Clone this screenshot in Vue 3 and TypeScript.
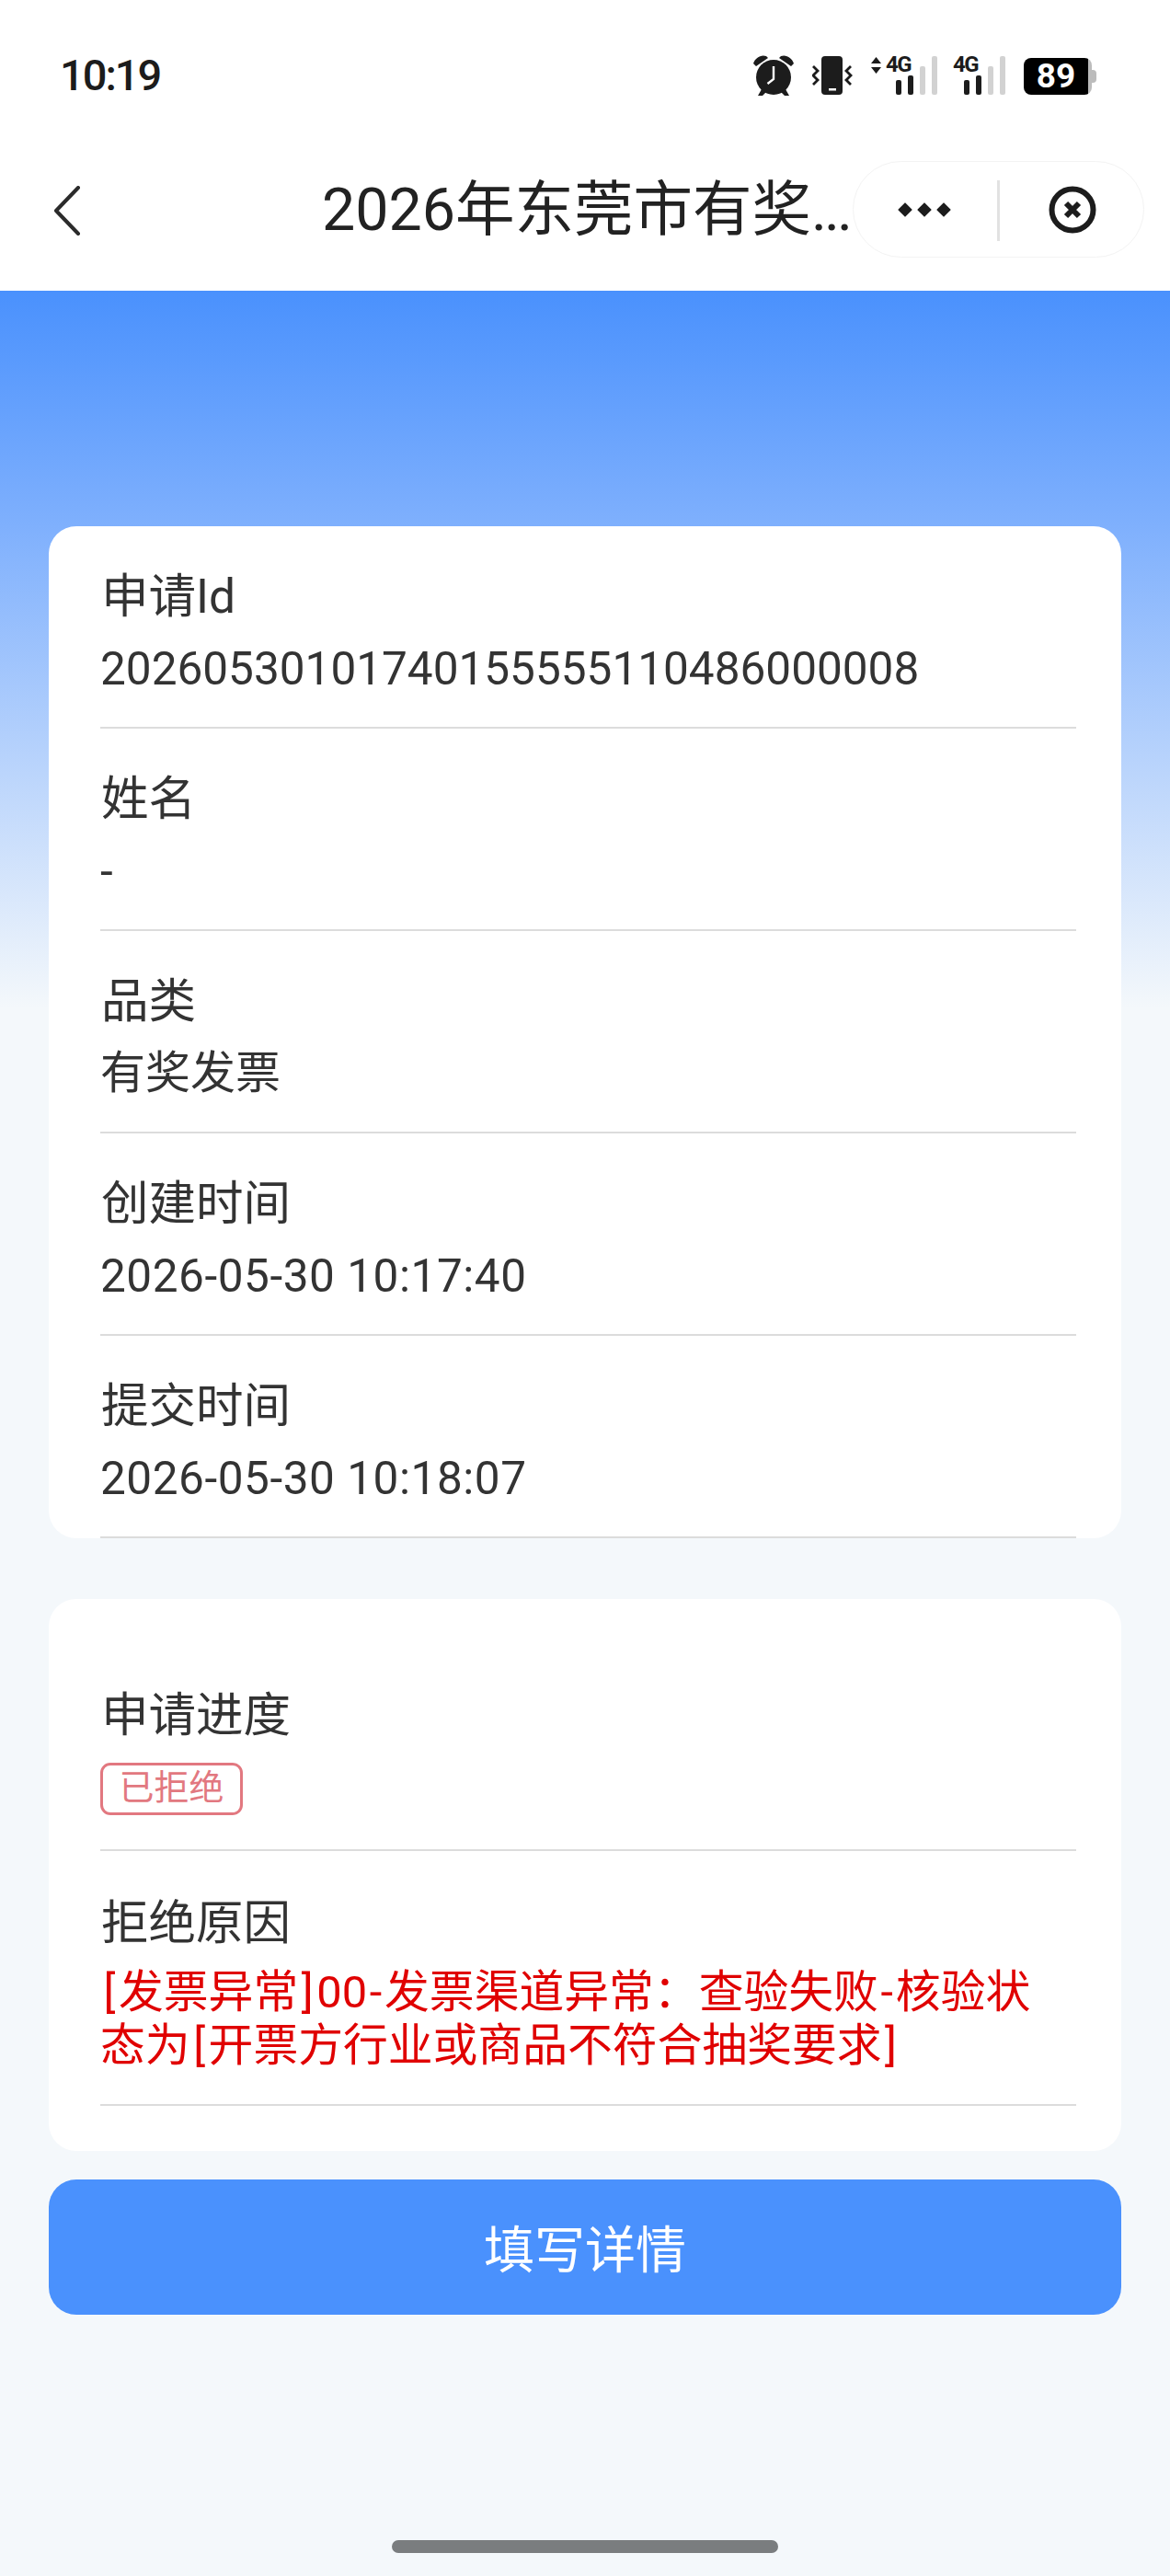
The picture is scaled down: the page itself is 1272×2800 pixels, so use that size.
<script setup lang="ts">
interface Row { label: string; value: string; kind: string }
const rows: Row[] = [
  { label: '申请Id', value: '20260530101740155555110486000008', kind: 'num' },
  { label: '姓名', value: '-', kind: 'num' },
  { label: '品类', value: '有奖发票', kind: 'cjk' },
  { label: '创建时间', value: '2026-05-30 10:17:40', kind: 'time' },
  { label: '提交时间', value: '2026-05-30 10:18:07', kind: 'time' },
]
</script>

<template>
  <div class="page">
    <header class="top">
      <div class="status">
        <span class="clock">10:19</span>
        <div class="icons">
          <svg class="alarm" viewBox="0 0 44 44" width="44" height="44">
            <circle cx="22" cy="24" r="19" fill="#1c1c1c" />
            <path d="M0 9C2 3 8 -1 14 1L16 3L3 12ZM44 9C42 3 36 -1 30 1L28 3L41 12Z" fill="#1c1c1c" />
            <path d="M9 37L5 44H10L14 40ZM35 37L39 44H34L30 40Z" fill="#1c1c1c" />
            <path d="M22 12V26L15.500 31" fill="none" stroke="#fff" stroke-width="2.400" />
          </svg>
          <svg class="vibrate" viewBox="0 0 44 42" width="44" height="42">
            <rect x="10" y="0" width="23" height="42" rx="4" fill="#1c1c1c" />
            <rect x="18" y="35" width="8" height="2.500" fill="#fff" />
            <path d="M1 11L6 16L1 21L6 26L1 31M42 11L37 16L42 21L37 26L42 31" fill="none" stroke="#1c1c1c" stroke-width="2.800" />
          </svg>
          <div class="signal first">
            <svg class="arrows" viewBox="0 0 11 18" width="11" height="18">
              <path d="M5.500 0L11 7H0ZM5.500 18L0 11H11Z" fill="#1c1c1c" />
            </svg>
            <span class="net">4G</span>
            <span class="bars">
              <i class="b1" /><i class="b2" /><i class="b3 off" /><i class="b4 off" />
            </span>
          </div>
          <div class="signal second">
            <span class="net">4G</span>
            <span class="bars">
              <i class="b1" /><i class="b2" /><i class="b3 off" /><i class="b4 off" />
            </span>
          </div>
          <div class="battery">
            <span class="level">89</span>
            <span class="nub" />
          </div>
        </div>
      </div>
      <nav class="navbar">
        <svg class="back" viewBox="0 0 30 54" width="30" height="54">
          <path d="M27 2L3 27L27 52" fill="none" stroke="#2b2b2b" stroke-width="4" stroke-linejoin="round" stroke-linecap="round" />
        </svg>
        <h1 class="title">2026年东莞市有奖<span class="dots">...</span></h1>
        <div class="capsule">
          <span class="more"><i /><i /><i /></span>
          <span class="sep" />
          <svg class="close" viewBox="0 0 52 52" width="52" height="52">
            <circle cx="26" cy="26" r="22.500" fill="none" stroke="#1c1c1c" stroke-width="6" />
            <path d="M19 19L33 33M33 19L19 33" stroke="#1c1c1c" stroke-width="6" />
          </svg>
        </div>
      </nav>
    </header>

    <main class="content">
      <section class="card info">
        <div v-for="r in rows" :key="r.label" class="row">
          <div class="label">{{ r.label }}</div>
          <div class="value" :class="r.kind">{{ r.value }}</div>
        </div>
      </section>

      <section class="card progress">
        <div class="row status-row">
          <div class="label">申请进度</div>
          <span class="tag">已拒绝</span>
        </div>
        <div class="row reason-row">
          <div class="label">拒绝原因</div>
          <div class="reason">
            <span class="line"><span class="br">[</span>发票异常<span class="br">]</span>00<span class="hy">-</span>发票渠道异常：查验失败<span class="hy">-</span>核验状</span>
            <span class="line">态为<span class="br">[</span>开票方行业或商品不符合抽奖要求<span class="br">]</span></span>
          </div>
        </div>
      </section>

      <button class="action" type="button">填写详情</button>
    </main>

    <div class="home" />
  </div>
</template>

<style>
html, body { margin: 0; padding: 0; background: #f4f8fb; }
</style>

<style scoped>
.page {
  position: relative;
  width: 1272px;
  height: 2800px;
  overflow: hidden;
  background: #f4f8fb;
  font-family: Roboto, "Noto Sans CJK SC", sans-serif;
  color: #333;
}
.top { height: 316px; background: #fff; }
.status {
  height: 160px;
  display: flex;
  justify-content: space-between;
  align-items: flex-start;
  padding: 0 0 0 65px;
}
.clock {
  margin-top: 54px;
  font-size: 47px;
  line-height: 56px;
  font-weight: 500;
  color: #1c1c1c;
  letter-spacing: -2px;
}
.icons { display: flex; align-items: flex-start; padding: 60px 0 0 0; position: relative; width: 453px; height: 44px; }
.alarm { flex: none; }
.vibrate { flex: none; margin: 1px 0 0 20px; }
.signal { position: relative; height: 42px; flex: none; margin-top: 1px; }
.signal.first { width: 71px; margin-left: 20px; }
.signal.second { width: 56px; margin-left: 18px; }
.arrows { position: absolute; left: 0; top: 1px; }
.net { position: absolute; top: -4px; font-size: 24px; line-height: 26px; font-weight: 700; color: #1c1c1c; font-family: "Roboto", sans-serif; letter-spacing: -1.500px; }
.first .net { left: 16px; }
.second .net { left: 0; }
.bars { position: absolute; bottom: 0; display: flex; align-items: flex-end; gap: 7px; }
.first .bars { left: 27px; }
.second .bars { left: 12px; }
.bars i { display: block; width: 6px; border-radius: 2px; background: #1c1c1c; }
.bars .b1 { height: 16px; }
.bars .b2 { height: 21px; }
.bars .b3 { height: 31px; }
.bars .b4 { height: 42px; }
.bars .off { background: #d2d2d2; }
.battery {
  position: relative;
  flex: none;
  margin: 3px 0 0 21px;
  width: 74px;
  height: 40px;
  border-radius: 8px;
  background: linear-gradient(90deg, #000 94%, #bcbcbc 94%);
  display: flex;
  align-items: center;
}
.level {
  width: 70px;
  text-align: center;
  color: #fff;
  font-size: 37px;
  line-height: 40px;
  font-weight: 700;
}
.nub {
  position: absolute;
  right: -5px;
  top: 13px;
  width: 5px;
  height: 14px;
  border-radius: 0 4px 4px 0;
  background: #bcbcbc;
}
.navbar { position: relative; height: 156px; }
.back { position: absolute; left: 58px; top: 42px; }
.title {
  margin: 0;
  position: absolute;
  left: 350px;
  top: 29px;
  font-size: 64.500px;
  line-height: 78px;
  font-weight: 400;
  color: #222;
  white-space: nowrap;
}
.dots { letter-spacing: -3px; }
.capsule {
  position: absolute;
  left: 927px;
  top: 15px;
  box-sizing: border-box;
  width: 317px;
  height: 105px;
  border: 1px solid #f3f3f3;
  border-radius: 53px;
  background: #fff;
  display: flex;
  align-items: center;
}
.more { position: absolute; left: 49px; top: 45px; display: flex; gap: 7px; }
.more i { display: block; width: 14px; height: 14px; background: #1c1c1c; transform: rotate(45deg) scale(0.8); border-radius: 1px; }
.sep { position: absolute; left: 156px; top: 20px; width: 3px; height: 66px; background: #e2e2e2; }
.close { position: absolute; left: 212px; top: 26px; }

.content {
  display: flex;
  flex-direction: column;
  background: linear-gradient(180deg, #4a91fd 0, #7fb0fd 256px, #f4f8fb 780px);
  padding: 256px 53px 0;
}
.card { background: #fff; border-radius: 30px; box-sizing: border-box; }
.info { height: 1100px; padding: 0 49px 0 56px; }
.row { box-sizing: border-box; height: 220px; border-bottom: 2px solid #dcdcdc; }
.info .row { height: 220px; padding-top: 47px; }
.label { font-size: 51.500px; line-height: 60px; color: #333; padding-left: 1px; }
.value { margin-top: 18px; font-size: 49.500px; line-height: 60px; color: #333; }
.value.cjk { font-size: 49px; }
.value.time { letter-spacing: 0.550px; }
.progress { margin-top: 66px; height: 600px; padding: 0 49px 0 56px; }
.status-row { height: 274px; padding-top: 97px; }
.tag {
  display: inline-block;
  box-sizing: border-box;
  margin-top: 21px;
  width: 155px;
  height: 57px;
  border: 3px solid #e27880;
  border-radius: 11px;
  color: #e27880;
  font-size: 38px;
  line-height: 49px;
  text-align: center;
}
.reason-row { height: 277px; padding-top: 49px; }
.reason { margin-top: 16px; font-size: 48.800px; line-height: 58px; color: #e00000; }
.line { display: block; white-space: nowrap; }
.br { display: inline-block; width: 20px; text-align: center; }
.hy { display: inline-block; width: 19px; text-align: center; }
.action {
  display: block;
  margin-top: 31px;
  height: 147px;
  border: 0;
  border-radius: 30px;
  padding: 0 0 4px;
  background: #4a91fd;
  color: #fff;
  font-family: inherit;
  font-size: 55px;
}
.home {
  position: absolute;
  left: 426px;
  top: 2761px;
  width: 420px;
  height: 14px;
  border-radius: 7px;
  background: #7a7d7f;
}
</style>
